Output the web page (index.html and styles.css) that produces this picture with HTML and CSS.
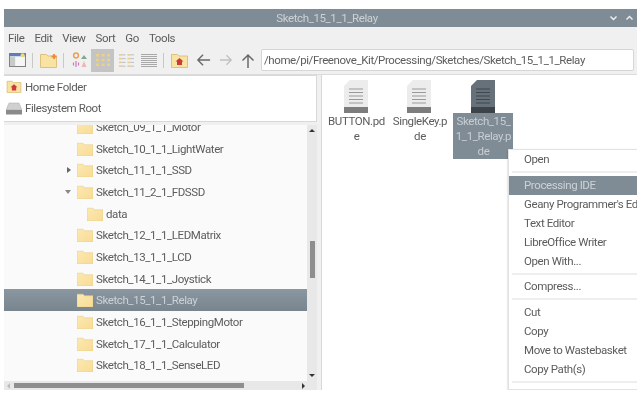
FILE: index.html
```html
<!DOCTYPE html>
<html lang="en">
<head>
<meta charset="utf-8">
<title>Sketch_15_1_1_Relay</title>
<link rel="stylesheet" href="styles.css">
</head>
<body>
<svg class="defs" width="0" height="0" aria-hidden="true">
  <defs>
    <linearGradient id="fold" x1="0" y1="0" x2="1" y2="1">
      <stop offset="0" stop-color="#fce8b0"/><stop offset="1" stop-color="#f8dc95"/>
    </linearGradient>
    <symbol id="folder" viewBox="0 0 16 14">
      <path d="M0 1.200h6l1.500 1.600H16V14H0z" fill="url(#fold)" stroke="#e6cd8e" stroke-width=".6"/>
    </symbol>
    <symbol id="doc" viewBox="0 0 24 33">
      <path d="M6 0h18v27H0V6z" fill="currentColor"/>
      <path d="M0 27h24v6H0z" fill="var(--doc-foot)"/>
      <path d="M5 9h14M5 12.500h14M5 16h14M5 19.500h14M5 23h14" stroke="var(--doc-line)" stroke-width="1.200"/>
    </symbol>
  </defs>
</svg>
<div class="window">
  <header class="titlebar">
    <span class="title">Sketch_15_1_1_Relay</span>
    <span class="winbtns">
      <svg width="9" height="6" viewBox="0 0 9 6"><path d="M1.500 1.500 4.500 4.500 7.500 1.500" class="chev"/></svg>
      <svg width="9" height="6" viewBox="0 0 9 6"><path d="M1.500 4.500 4.500 1.500 7.500 4.500" class="chev"/></svg>
    </span>
  </header>
  <nav class="menubar">
    <span>File</span><span>Edit</span><span>View</span><span>Sort</span><span>Go</span><span>Tools</span>
  </nav>
  <div class="toolbar">
    <svg class="tb" width="17" height="14" viewBox="0 0 18 15">
      <rect x=".5" y=".5" width="17" height="14" fill="#f6f6f6" stroke="#777"/>
      <rect x="0" y="0" width="18" height="3.500" fill="#5b7fb4"/>
      <rect x="1" y="4" width="5.500" height="10" fill="#c9c9c9"/>
      <circle cx="14.500" cy="2.500" r="2.200" fill="#f5d76e"/>
    </svg>
    <i class="tsep"></i>
    <svg class="tb" width="17" height="15" viewBox="0 0 17 15">
      <path d="M.5 1.500h6L8 3h8.500v11.500H.5z" fill="#f9e3a3" stroke="#dcc27e"/>
      <path d="M11.500 3.500h5M14 1v5" stroke="#ef8a3c" stroke-width="1.800"/>
    </svg>
    <i class="tsep"></i>
    <svg class="tb tsmall" width="16" height="16" viewBox="0 0 16 16">
      <circle cx="4" cy="3.500" r="2.400" fill="none" stroke="#e8a15a" stroke-width="1.500"/>
      <path d="M9 7l3-4 3 4z" fill="#7fa98a"/>
      <path d="M4 9v6M1.500 10.500v3M6.500 10.500v3" stroke="#c77bc0" stroke-width="1.200"/>
      <path d="M9.500 15l2.500-6 2.500 6z" fill="#eeb7b7"/>
    </svg>
    <span class="tgrid-on">
      <svg width="16" height="14" viewBox="0 0 16 14" fill="#ecd083">
        <rect x="1" y="1" width="3" height="2.500"/><rect x="6.500" y="1" width="3" height="2.500"/><rect x="12" y="1" width="3" height="2.500"/>
        <rect x="1" y="5.800" width="3" height="2.500"/><rect x="6.500" y="5.800" width="3" height="2.500"/><rect x="12" y="5.800" width="3" height="2.500"/>
        <rect x="1" y="10.500" width="3" height="2.500"/><rect x="6.500" y="10.500" width="3" height="2.500"/><rect x="12" y="10.500" width="3" height="2.500"/>
      </svg>
    </span>
    <svg class="tb tlist" width="16" height="15" viewBox="0 0 17 15">
      <path d="M1 1.500h3M1 5.500h3M1 9.500h3M1 13.500h3M10 1.500h3M10 5.500h3M10 9.500h3M10 13.500h3" stroke="#ecd08c" stroke-width="2"/>
      <path d="M4 1.500h4M4 5.500h4M4 9.500h4M4 13.500h4M13 1.500h4M13 5.500h4M13 9.500h4M13 13.500h4" stroke="#bbb" stroke-width="1"/>
    </svg>
    <svg class="tb tlist2" width="16" height="15" viewBox="0 0 16 15">
      <path d="M0 1.500h16M0 3.500h16M0 5.500h16M0 7.500h16M0 9.500h16M0 11.500h16M0 13.500h16" stroke="#a8a8a8" stroke-width="1"/>
    </svg>
    <i class="tsep"></i>
    <svg class="tb" width="17" height="15" viewBox="0 0 17 15">
      <path d="M.5 1.500h6L8 3h8.500v11.500H.5z" fill="#f9e3a3" stroke="#dcc27e"/>
      <path d="M8.500 5 4.500 8.500H6V12h5V8.500h1.500z" fill="#cc3b3b"/>
    </svg>
    <svg class="tb arrow" width="15" height="14" viewBox="0 0 16 14"><path d="M15 7H2M7.500 1.500 2 7l5.500 5.500" class="arr"/></svg>
    <svg class="tb arrow off" width="14" height="14" viewBox="0 0 16 14"><path d="M1 7h13M8.500 1.500 14 7l-5.500 5.500" class="arr"/></svg>
    <svg class="tb arrow" width="14" height="15" viewBox="0 0 14 15"><path d="M7 15V2M1.500 7.500 7 2l5.500 5.500" class="arr"/></svg>
    <div class="path">/home/pi/Freenove_Kit/Processing/Sketches/Sketch_15_1_1_Relay</div>
  </div>
  <main class="panes">
    <aside class="side">
      <ul class="places">
        <li>
          <svg width="16" height="13" viewBox="0 0 17 15">
            <path d="M.5 1.500h6L8 3h8.500v11.500H.5z" fill="#f9e3a3" stroke="#dcc27e"/>
            <path d="M8.500 5 4.500 8.500H6V12h5V8.500h1.500z" fill="#cc3b3b"/>
          </svg>Home Folder</li>
        <li>
          <svg width="16" height="13" viewBox="0 0 16 13">
            <path d="M3 1h10l3 7H0z" fill="#d0d0d0" stroke="#aaa" stroke-width=".5"/><path d="M0 8h16v4.500H0z" fill="#8a8a8a"/>
          </svg>Filesystem Root</li>
      </ul>
      <div class="tree">
        <div class="tree-view">
          <ul class="rows">
            <li class="row"><svg class="fd"><use href="#folder"/></svg>Sketch_09_1_1_Motor</li>
            <li class="row"><svg class="fd"><use href="#folder"/></svg>Sketch_10_1_1_LightWater</li>
            <li class="row"><i class="exp closed"></i><svg class="fd"><use href="#folder"/></svg>Sketch_11_1_1_SSD</li>
            <li class="row"><i class="exp open"></i><svg class="fd"><use href="#folder"/></svg>Sketch_11_2_1_FDSSD</li>
            <li class="row child"><svg class="fd"><use href="#folder"/></svg>data</li>
            <li class="row"><svg class="fd"><use href="#folder"/></svg>Sketch_12_1_1_LEDMatrix</li>
            <li class="row"><svg class="fd"><use href="#folder"/></svg>Sketch_13_1_1_LCD</li>
            <li class="row"><svg class="fd"><use href="#folder"/></svg>Sketch_14_1_1_Joystick</li>
            <li class="row sel"><svg class="fd"><use href="#folder"/></svg>Sketch_15_1_1_Relay</li>
            <li class="row"><svg class="fd"><use href="#folder"/></svg>Sketch_16_1_1_SteppingMotor</li>
            <li class="row"><svg class="fd"><use href="#folder"/></svg>Sketch_17_1_1_Calculator</li>
            <li class="row"><svg class="fd"><use href="#folder"/></svg>Sketch_18_1_1_SenseLED</li>
          </ul>
          <div class="vbar"><i class="up"></i><i class="vthumb"></i><i class="down"></i></div>
        </div>
        <div class="hbar"><i class="left"></i><i class="hthumb"></i><i class="right"></i></div>
      </div>
    </aside>
    <section class="files">
      <figure class="file">
        <svg class="doc"><use href="#doc"/></svg>
        <figcaption>BUTTON.pd<br>e</figcaption>
      </figure>
      <figure class="file">
        <svg class="doc"><use href="#doc"/></svg>
        <figcaption>SingleKey.p<br>de</figcaption>
      </figure>
      <figure class="file picked">
        <svg class="doc"><use href="#doc"/></svg>
        <figcaption>Sketch_15_<br>1_1_Relay.p<br>de</figcaption>
      </figure>
    </section>
  </main>
  <ul class="menu">
    <li>Open</li>
    <li class="sep"></li>
    <li class="hot">Processing IDE</li>
    <li>Geany Programmer's Editor</li>
    <li>Text Editor</li>
    <li>LibreOffice Writer</li>
    <li>Open With...</li>
    <li class="sep"></li>
    <li>Compress...</li>
    <li class="sep"></li>
    <li>Cut</li>
    <li>Copy</li>
    <li>Move to Wastebasket</li>
    <li>Copy Path(s)</li>
    <li class="sep"></li>
    <li>Rename...</li>
  </ul>
</div>
</body>
</html>
```
FILE: styles.css
```css
* { box-sizing: border-box; }
html, body { margin: 0; height: 100%; }
body {
  background: #fff;
  font-family: Roboto, "Liberation Sans", sans-serif;
  font-size: 11.500px;
  letter-spacing: -.4px;
  color: #5c5c5c;
  overflow: hidden;
  padding: 9px 0 10px 4px;
}
.defs { position: absolute; }
ul { list-style: none; margin: 0; padding: 0; }
figure { margin: 0; }

.window {
  position: relative;
  height: 381px;
  width: 633px;
  display: flex;
  flex-direction: column;
  background: #f0f0f0;
  overflow: hidden;
  filter: blur(.3px);
}
.titlebar {
  flex: 0 0 18px;
  background: #7f8c95;
  color: #cdd2d6;
  display: flex;
  align-items: center;
  justify-content: center;
  padding-left: 13px;
  position: relative;
}
.winbtns {
  position: absolute;
  right: 3px;
  top: 6px;
  display: flex;
  gap: 7px;
}
.chev { fill: none; stroke: #f2f2f2; stroke-width: 1.400; }

.menubar {
  flex: 0 0 21px;
  display: flex;
  align-items: center;
  gap: 10px;
  padding-left: 4px;
}
.toolbar {
  flex: 0 0 26px;
  display: flex;
  align-items: center;
  padding: 0 0 2px 5px;
}
.tb { flex: none; }
.tsep { flex: none; width: 1px; height: 15px; background: #c8c8c8; margin: 0 7px 0 6px; }
.tsmall { margin-left: 1px; }
.tgrid-on {
  flex: none;
  width: 23px;
  height: 23px;
  background: #c4c4c4;
  display: flex;
  align-items: center;
  justify-content: center;
  margin: 0 4px 0 3px;
}
.tlist { margin-right: 7px; }
.arrow { margin-left: 8px; }
.arrow.off { opacity: .35; }
.arr { fill: none; stroke: #6a6a6a; stroke-width: 1.500; }
.path {
  margin-left: 6px;
  width: 373px;
  height: 22px;
  background: #fff;
  border: 1px solid #d6d6d6;
  border-radius: 2px;
  padding-left: 2px;
  line-height: 20px;
  white-space: nowrap;
}

.panes { flex: 1; display: flex; min-height: 0; border-top: 1px solid #dcdcdc; }
.side { flex: 0 0 313px; display: flex; flex-direction: column; min-height: 0; }
.places {
  flex: 0 0 47px;
  background: #fff;
  border: 1px solid #d8d8d8;
  border-left: 0;
}
.places li {
  height: 21.500px;
  display: flex;
  align-items: center;
  gap: 3px;
  padding-left: 2px;
}
.tree { flex: 1; min-height: 0; display: flex; flex-direction: column; background: #f0f0f0; padding-top: 3px; }
.tree-view { flex: 1; min-height: 0; display: flex; position: relative; }
.rows { flex: 1; background: #fafafa; overflow: hidden; min-width: 0; }
.rows .row:first-child { margin-top: -8.900px; }
.row {
  height: 21.670px;
  display: flex;
  align-items: center;
  padding-left: 73px;
  position: relative;
  white-space: nowrap;
}
.row.child { padding-left: 83px; }
.row.sel { background: linear-gradient(#8a96a0, #78848e); color: #cdd2d6; }
.fd { width: 16px; height: 14px; margin-right: 3px; flex: none; }
.exp { position: absolute; left: 61px; top: 9px; width: 0; height: 0; }
.exp.closed { border-left: 4px solid #666; border-top: 3px solid transparent; border-bottom: 3px solid transparent; left: 63px; top: 8px; }
.exp.open { border-top: 4px solid #888; border-left: 3.500px solid transparent; border-right: 3.500px solid transparent; }

.vbar {
  flex: 0 0 10px;
  background: #e8e8e8;
  display: flex;
  flex-direction: column;
  align-items: center;
  padding: 4px 0 0;
  position: relative;
}
.up { border-bottom: 3px solid #333; border-left: 3px solid transparent; border-right: 3px solid transparent; }
.vthumb { width: 5px; height: 37px; background: #8e8e8e; margin-top: 109px; }
.down { border-top: 3px solid #333; border-left: 3px solid transparent; border-right: 3px solid transparent; position: absolute; bottom: 4px; }
.hbar {
  flex: 0 0 9px;
  background: #e8e8e8;
  display: flex;
  align-items: center;
  padding-left: 3px;
  position: relative;
}
.left { border-right: 3px solid #bbb; border-top: 3px solid transparent; border-bottom: 3px solid transparent; }
.hthumb { width: 230px; height: 5px; background: #8e8e8e; margin-left: 4px; }
.right { border-left: 3px solid #333; border-top: 3px solid transparent; border-bottom: 3px solid transparent; position: absolute; left: 298px; }

.files {
  flex: 1;
  background: #fff;
  margin-left: 4px;
  border-left: 1px solid #d8d8d8;
  display: flex;
  align-items: flex-start;
  padding: 5px 0 0 3.500px;
}
.file {
  width: 60px;
  margin-right: 3.500px;
  display: flex;
  flex-direction: column;
  align-items: center;
  text-align: center;
  line-height: 15px;
  white-space: nowrap;
}
.doc {
  width: 24px;
  height: 33px;
  color: #ececec;
  --doc-foot: #7d7d7d;
  --doc-line: #9a9a9a;
}
.file figcaption { width: 100%; padding: 1px 0 0 2px; }
.picked .doc { color: #66717a; --doc-foot: #3c4449; --doc-line: #3f474d; }
.picked figcaption { background: #7f8c95; color: #c8ced3; }

.menu {
  position: absolute;
  left: 504px;
  top: 140px;
  width: 200px;
  height: 241px;
  background: #fff;
  border: 1px solid #e2e2e2;
  white-space: nowrap;
  overflow: hidden;
  box-shadow: 0 1px 2px rgba(0,0,0,.25);
}
.menu li { height: 19px; line-height: 19px; padding-left: 15px; }
.menu .hot { background: #7f8c95; color: #cdd2d6; }
.menu .sep { height: 6.500px; position: relative; }
.menu .sep::after { content: ""; position: absolute; left: 3px; right: 0; top: 2px; height: 2px; background: #eee; }
```
